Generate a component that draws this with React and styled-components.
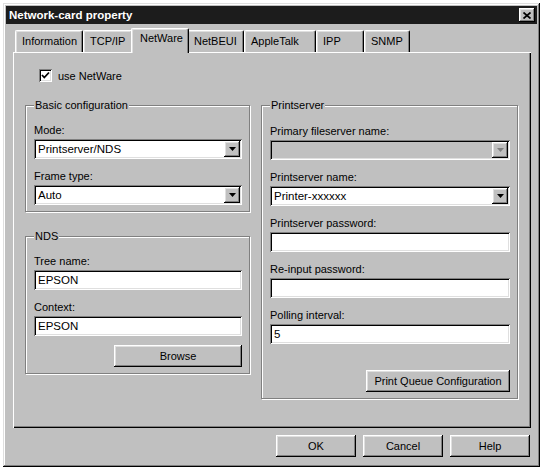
import React from "react";
import styled, { createGlobalStyle } from "styled-components";

const raised = `
  box-shadow: inset -1px -1px #000, inset 1px 1px #fff,
    inset -2px -2px #808080, inset 2px 2px #dfdfdf;
`;
const sunken = `
  box-shadow: inset 1px 1px #808080, inset -1px -1px #fff,
    inset 2px 2px #000, inset -2px -2px #dfdfdf;
`;

const GlobalStyle = createGlobalStyle`
  * { box-sizing: border-box; }
  html, body { margin: 0; background: #fff; }
  body {
    font-family: "Liberation Sans", Arial, sans-serif;
    font-size: 11px;
    color: #000;
  }
`;

const tabs = [
  { name: "Information", w: 68 },
  { name: "TCP/IP", w: 50 },
  { name: "NetWare", w: 54, active: true },
  { name: "NetBEUI", w: 57 },
  { name: "AppleTalk", w: 72 },
  { name: "IPP", w: 48 },
  { name: "SNMP", w: 46 },
];

const App = () => {
  return (
    <>
      <GlobalStyle />
      <Window>
        <TitleBar>
          <Title>Network-card property</Title>
          <CloseButton>
            <svg width="8" height="7" viewBox="0 0 8 7">
              <path d="M0.5 0.5 L7.5 6.5 M7.5 0.5 L0.5 6.5" stroke="#000" strokeWidth="1.7" />
            </svg>
          </CloseButton>
        </TitleBar>
        <Body>
          <TabStrip>
            {tabs.map((t) => (
              <Tab key={t.name} $w={t.w} $active={t.active}>
                {t.name}
              </Tab>
            ))}
          </TabStrip>
          <Panel>
            <CheckRow>
              <CheckBox>
                <svg width="9" height="9" viewBox="0 0 9 9">
                  <path d="M1 4 L3.3 6.5 L8 1.5" stroke="#000" strokeWidth="1.8" fill="none" />
                </svg>
              </CheckBox>
              use NetWare
            </CheckRow>
            <Columns>
              <Column>
                <Group>
                  <GroupTitle>Basic configuration</GroupTitle>
                  <Field>
                    <Label>Mode:</Label>
                    <Combo value="Printserver/NDS" />
                  </Field>
                  <Field>
                    <Label>Frame type:</Label>
                    <Combo value="Auto" />
                  </Field>
                </Group>
                <Group $top={18}>
                  <GroupTitle>NDS</GroupTitle>
                  <Field>
                    <Label>Tree name:</Label>
                    <TextBox>EPSON</TextBox>
                  </Field>
                  <Field>
                    <Label>Context:</Label>
                    <TextBox>EPSON</TextBox>
                  </Field>
                  <ActionRow $top={9}>
                    <PushButton $w={128}>Browse</PushButton>
                  </ActionRow>
                </Group>
              </Column>
              <Column>
                <Group $pad={13}>
                  <GroupTitle>Printserver</GroupTitle>
                  <Field>
                    <Label>Primary fileserver name:</Label>
                    <Combo value="" disabled />
                  </Field>
                  <Field>
                    <Label>Printserver name:</Label>
                    <Combo value="Printer-xxxxxx" />
                  </Field>
                  <Field>
                    <Label>Printserver password:</Label>
                    <TextBox />
                  </Field>
                  <Field>
                    <Label>Re-input password:</Label>
                    <TextBox />
                  </Field>
                  <Field>
                    <Label>Polling interval:</Label>
                    <TextBox>5</TextBox>
                  </Field>
                  <ActionRow $top={26}>
                    <PushButton $w={144}>Print Queue Configuration</PushButton>
                  </ActionRow>
                </Group>
              </Column>
            </Columns>
          </Panel>
          <Footer>
            <PushButton $w={80}>OK</PushButton>
            <PushButton $w={80}>Cancel</PushButton>
            <PushButton $w={80}>Help</PushButton>
          </Footer>
        </Body>
      </Window>
    </>
  );
};

const Combo = ({ value, disabled }) => (
  <ComboBox $disabled={disabled}>
    <ComboValue>{value}</ComboValue>
    <DropButton>
      <svg width="7" height="4" viewBox="0 0 7 4">
        <polygon points="0,0 7,0 3.5,4" fill={disabled ? "#808080" : "#000"} />
      </svg>
    </DropButton>
  </ComboBox>
);

const Window = styled.div`
  width: 537px;
  height: 464px;
  margin: 3px 0 0 3px;
  padding: 3px;
  background: #c0c0c0;
  box-shadow: inset -1px -1px #000, inset 1px 1px #dfdfdf,
    inset -2px -2px #808080, inset 2px 2px #fff;
  display: flex;
  flex-direction: column;
`;

const TitleBar = styled.div`
  flex: none;
  height: 18px;
  background: #1c1c1c;
  display: flex;
  align-items: center;
  justify-content: space-between;
  padding: 0 2px 0 3px;
`;

const Title = styled.span`
  color: #fff;
  font-weight: bold;
  font-size: 11.5px;
`;

const CloseButton = styled.button`
  width: 16px;
  height: 14px;
  padding: 0;
  border: 0;
  background: #c0c0c0;
  ${raised}
  display: flex;
  align-items: center;
  justify-content: center;
`;

const Body = styled.div`
  flex: 1;
  display: flex;
  flex-direction: column;
  padding: 0 6px 0 7px;
`;

const TabStrip = styled.div`
  flex: none;
  margin-top: 4px;
  height: 24px;
  display: flex;
  align-items: flex-end;
  padding-left: 2px;
  position: relative;
  z-index: 1;
`;

const Tab = styled.div`
  position: relative;
  z-index: ${(p) => (p.$active ? 2 : 1)};
  width: ${(p) => p.$w + (p.$active ? 4 : 0)}px;
  height: ${(p) => (p.$active ? 25 : 22)}px;
  margin: ${(p) => (p.$active ? "0 -2px -1px" : "0")};
  padding: ${(p) => (p.$active ? "3px 0 0 8px" : "4px 0 0 6px")};
  line-height: 13px;
  white-space: nowrap;
  background: #c0c0c0;
  border-top: 1px solid #fff;
  border-left: 1px solid #fff;
  border-right: 1px solid #000;
  border-radius: 2px 2px 0 0;
  box-shadow: inset -1px 0 #808080, inset 1px 1px #dfdfdf;
`;

const Panel = styled.div`
  flex: none;
  height: 376px;
  background: #c0c0c0;
  box-shadow: inset 1px 1px #fff, inset -1px -1px #000, inset -2px -2px #808080;
  padding: 17px 0 0 12px;
`;

const CheckRow = styled.label`
  display: flex;
  align-items: center;
  gap: 6px;
  height: 13px;
  margin-left: 14px;
`;

const CheckBox = styled.span`
  width: 13px;
  height: 13px;
  background: #fff;
  ${sunken}
  display: flex;
  align-items: center;
  justify-content: center;
`;

const Columns = styled.div`
  display: grid;
  grid-template-columns: 225px 257px;
  column-gap: 11px;
  margin-top: 17px;
  align-items: start;
`;

const Column = styled.div`
  display: flex;
  flex-direction: column;
`;

const Group = styled.fieldset`
  margin: ${(p) => p.$top || 0}px 0 0;
  padding: ${(p) => p.$pad || 12}px 7px 6px 8px;
  border: 1px solid #808080;
  box-shadow: inset 1px 1px #fff, 1px 1px #fff;
  min-width: 0;
`;

const GroupTitle = styled.legend`
  padding: 0 1px;
  line-height: 13px;
  background: #c0c0c0;
`;

const Field = styled.div`
  display: flex;
  flex-direction: column;
  & + & {
    margin-top: 11px;
  }
`;

const Label = styled.div`
  line-height: 13px;
  margin-bottom: 2px;
`;

const TextBox = styled.div`
  height: 20px;
  background: #fff;
  ${sunken}
  padding: 0 4px;
  display: flex;
  align-items: center;
  font-size: 11.5px;
`;

const ComboBox = styled.div`
  height: 20px;
  background: ${(p) => (p.$disabled ? "#c0c0c0" : "#fff")};
  ${sunken}
  padding: 2px 2px 2px 4px;
  display: flex;
  align-items: center;
  font-size: 11.5px;
`;

const ComboValue = styled.span`
  flex: 1;
`;

const DropButton = styled.span`
  width: 16px;
  height: 16px;
  background: #c0c0c0;
  ${raised}
  display: flex;
  align-items: center;
  justify-content: center;
`;

const ActionRow = styled.div`
  display: flex;
  justify-content: flex-end;
  margin-top: ${(p) => p.$top}px;
`;

const PushButton = styled.button`
  width: ${(p) => p.$w}px;
  height: 22px;
  padding: 0;
  border: 0;
  background: #c0c0c0;
  ${raised}
  font-family: inherit;
  font-size: 11px;
  color: #000;
`;

const Footer = styled.div`
  display: flex;
  justify-content: flex-end;
  gap: 7px;
  margin-top: 7px;
  padding-right: 1px;
`;

export default App;
